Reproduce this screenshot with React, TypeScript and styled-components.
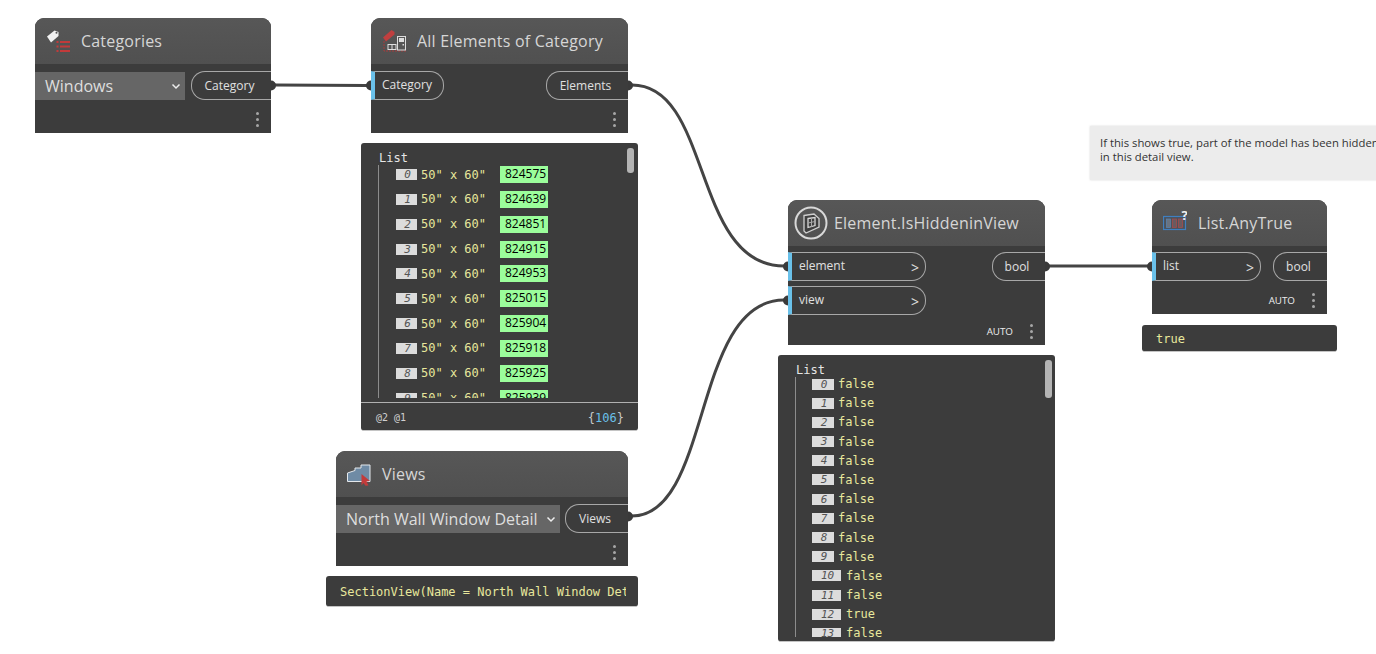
import React from 'react';
import styled, { createGlobalStyle } from 'styled-components';

const GlobalStyle = createGlobalStyle`
  html, body { margin: 0; padding: 0; background: #fff; overflow: hidden; }
`;

const uiFont = `"Open Sans", "Noto Sans", sans-serif`;
const monoFont = `"DejaVu Sans Mono", "Liberation Mono", monospace`;

const Canvas = styled.div`
  position: relative;
  width: 1376px;
  height: 654px;
  overflow: hidden;
  background: #fff;
  font-family: ${uiFont};
`;

const Wires = styled.svg`
  position: absolute;
  inset: 0;
  z-index: 2;
  pointer-events: none;
`;

const Node = styled.div<{ $x: number; $y: number; $w: number; $h: number }>`
  position: absolute;
  left: ${(p) => p.$x}px;
  top: ${(p) => p.$y}px;
  width: ${(p) => p.$w}px;
  height: ${(p) => p.$h}px;
  display: flex;
  flex-direction: column;
  background: #3c3c3c;
  border-radius: 9px 9px 0 0;
`;

const Header = styled.div`
  flex: none;
  height: 46px;
  display: flex;
  align-items: center;
  background: linear-gradient(#575757, #505050);
  border-radius: 9px 9px 0 0;
  color: #d6d6d6;
  font-size: 16px;
  letter-spacing: 0.2px;
  white-space: nowrap;
`;

const IconSlot = styled.div`
  flex: none;
  width: 46px;
  display: flex;
  justify-content: center;
  align-items: center;
`;

const Ports = styled.div<{ $top: number }>`
  display: flex;
  justify-content: space-between;
  align-items: flex-start;
  padding-top: ${(p) => p.$top}px;
`;

const Column = styled.div`
  display: flex;
  flex-direction: column;
  gap: 5px;
`;

const InPort = styled.div<{ $w: number }>`
  box-sizing: border-box;
  width: ${(p) => p.$w}px;
  height: 29px;
  display: flex;
  justify-content: space-between;
  align-items: center;
  padding: 0 6px 3px 7px;
  border: 1px solid #a8a8a8;
  border-left: 4px solid #6ac1ea;
  border-radius: 0 14px 14px 0;
  color: #e0e0e0;
  font-size: 12px;
`;

const Chevron = styled.span`
  font-size: 14px;
  margin-top: 4px;
`;

const OutPort = styled.div<{ $w: number }>`
  box-sizing: border-box;
  width: ${(p) => p.$w}px;
  height: 29px;
  display: flex;
  align-items: center;
  justify-content: center;
  padding-right: 4px;
  border: 1px solid #a8a8a8;
  border-right: none;
  border-radius: 14px 0 0 14px;
  color: #e0e0e0;
  font-size: 12px;
`;

const DropRow = styled.div`
  display: flex;
  justify-content: space-between;
  align-items: center;
  padding-top: 7px;
`;

const Dropdown = styled.div<{ $w: number }>`
  box-sizing: border-box;
  width: ${(p) => p.$w}px;
  height: 28px;
  display: flex;
  align-items: center;
  justify-content: space-between;
  padding: 0 4px 0 10px;
  background: #666;
  color: #dedede;
  font-size: 16px;
  white-space: nowrap;
`;

const Footer = styled.div`
  box-sizing: border-box;
  margin-top: auto;
  height: 30px;
  display: flex;
  align-items: center;
  justify-content: flex-end;
  gap: 17px;
  padding: 2px 12px 0 0;
  color: #ececec;
  font-size: 9.8px;
`;

const Dots = styled.div`
  display: flex;
  flex-direction: column;
  gap: 3px;
  span {
    display: block;
    width: 3px;
    height: 3px;
    border-radius: 50%;
    background: #a6a6a6;
  }
`;

const Preview = styled.div<{ $x: number; $y: number; $w: number; $h: number }>`
  position: absolute;
  left: ${(p) => p.$x}px;
  top: ${(p) => p.$y}px;
  width: ${(p) => p.$w}px;
  height: ${(p) => p.$h}px;
  display: flex;
  flex-direction: column;
  box-sizing: border-box;
  background: #3c3c3c;
  border-radius: 3px;
  border-bottom: 1px solid #c4c4c4;
  color: #e8e89c;
  font-family: ${monoFont};
  font-size: 12px;
`;

const SingleValue = styled.div`
  flex: 1;
  display: flex;
  align-items: center;
  padding: 1px 12px 0 14px;
  white-space: nowrap;
  overflow: hidden;
`;

const ValueClip = styled.div`
  overflow: hidden;
`;

const ListTitle = styled.div`
  flex: none;
  height: 14px;
  line-height: 14px;
  margin: 8px 0 0 18px;
  color: #e6e6e6;
`;

const ListBody = styled.div<{ $h: number; $gap: number; $top: number; $indent: number }>`
  flex: none;
  height: ${(p) => p.$h}px;
  margin-left: 17px;
  padding: ${(p) => p.$top}px 0 0 ${(p) => p.$indent}px;
  box-sizing: border-box;
  display: flex;
  flex-direction: column;
  gap: ${(p) => p.$gap}px;
  overflow: hidden;
  border-left: 1px solid #8c8c8c;
`;

const Row = styled.div<{ $h: number }>`
  flex: none;
  height: ${(p) => p.$h}px;
  display: flex;
  align-items: center;
  white-space: nowrap;
`;

const Badge = styled.span<{ $w: number }>`
  flex: none;
  width: ${(p) => p.$w}px;
  height: 11px;
  line-height: 11px;
  box-sizing: border-box;
  margin-right: 4px;
  padding-left: 2px;
  text-align: center;
  background: #dcdcdc;
  color: #555;
  font-style: italic;
  font-size: 11px;
`;

const WideBadge = styled(Badge)`
  margin-right: 5px;
`;

const RowValue = styled.span`
  flex: none;
  width: 79px;
`;

const IdChip = styled.span`
  flex: none;
  height: 17px;
  line-height: 15px;
  padding: 0 2px 0 5px;
  background: #9bfd9b;
  color: #000;
  font-family: ${uiFont};
  font-size: 12px;
`;

const ListFooter = styled.div`
  box-sizing: border-box;
  margin-top: auto;
  height: 28px;
  display: flex;
  align-items: center;
  justify-content: space-between;
  padding: 2px 14px 0 15px;
  border-top: 1px solid #b0b0b0;
  color: #d0d0d0;
  font-size: 10px;
`;

const Count = styled.span`
  font-size: 12px;
  color: #c8c8c8;
  b {
    font-weight: normal;
    color: #6ac1ea;
  }
`;

const ScrollThumb = styled.div<{ $h: number; $right: number }>`
  position: absolute;
  top: 5px;
  right: ${(p) => p.$right}px;
  width: 7px;
  height: ${(p) => p.$h}px;
  border-radius: 3px;
  background: #b4b4b4;
`;

const Note = styled.div`
  position: absolute;
  left: 1090px;
  top: 126px;
  width: 330px;
  height: 54px;
  box-sizing: border-box;
  padding: 10px;
  background: #ececec;
  box-shadow: 0 0 2px rgba(0, 0, 0, 0.15);
  color: #333;
  font-size: 11.3px;
  line-height: 14px;
  white-space: nowrap;
`;

const Caret = () => (
  <svg width="10" height="10" viewBox="0 0 10 10">
    <path d="M1.5 3.5 5 7l3.5-3.5" fill="none" stroke="#eee" strokeWidth="1.5" />
  </svg>
);

const NodeFooter = ({ auto }: { auto?: boolean }) => (
  <Footer>
    {auto && <span>AUTO</span>}
    <Dots>
      <span />
      <span />
      <span />
    </Dots>
  </Footer>
);

const CategoriesIcon = () => (
  <svg width="24" height="24" viewBox="0 0 24 24">
    <path d="M1 7.5 8.5 1.5 12.5 3 12.5 7 5 13.5Z" fill="#f2f2f2" />
    <circle cx="10.5" cy="3.8" r="1" fill="#555" />
    <g fill="#c23a3a">
      <rect x="10.5" y="12" width="2" height="2" />
      <rect x="10.5" y="16.5" width="2" height="2" />
      <rect x="10.5" y="21" width="2" height="2" />
      <rect x="14" y="12" width="10" height="2" />
      <rect x="14" y="16.5" width="10" height="2" />
      <rect x="14" y="21" width="10" height="2" />
    </g>
  </svg>
);

const ElementsIcon = () => (
  <svg width="24" height="24" viewBox="0 0 24 24">
    <path d="M1 8.5 9.5 1 12.5 3 12.5 5.5 4 12.5Z" fill="#bf3f3f" />
    <path d="M2 12V22H24" fill="none" stroke="#a83a3a" strokeWidth="1" strokeDasharray="2 1" />
    <rect x="6" y="15.5" width="8" height="5" fill="#555" stroke="#e0e0e0" strokeWidth="1" />
    <path d="M10 15.5V20.5" stroke="#e0e0e0" />
    <rect x="15.5" y="7.5" width="8" height="13.5" fill="#565656" stroke="#dcdcdc" />
    <rect x="17" y="9" width="5" height="4" fill="#dcdcdc" />
    <rect x="20.5" y="15" width="1.5" height="1.5" fill="#dcdcdc" />
  </svg>
);

const ViewsIcon = () => (
  <svg width="24" height="24" viewBox="0 0 24 24">
    <path d="M0.5 19.5V11L8 8.5V6H14V3H23V19.5Z" fill="#6f8ba5" stroke="#e4e8ec" strokeWidth="1" />
    <path d="M14.5 12 23 19 19.5 19.5 21.5 23.5 18.5 23.8 16.5 21 14.5 23.5Z" fill="#c23b3b" />
  </svg>
);

const ElementIcon = () => (
  <svg width="34" height="34" viewBox="0 0 34 34">
    <circle cx="17" cy="17" r="15.5" fill="none" stroke="#d8d8d8" strokeWidth="2" />
    <path d="M10 9.5 20 8 25 12.5V21L12 27 10 25Z" fill="#3f3f3f" stroke="#cfcfcf" strokeWidth="1.3" />
    <path d="M14 12.5 21 11.5V19.5L14 21.5Z" fill="none" stroke="#d8d8d8" strokeWidth="1.3" />
    <path d="M17.5 12V21M14 17 21 15.5" stroke="#a8a8a8" strokeWidth="1" />
  </svg>
);

const AnyTrueIcon = () => (
  <svg width="24" height="24" viewBox="0 0 24 24">
    <rect x="0.5" y="5.5" width="22" height="13" fill="#4c525a" stroke="#3f7fc0" strokeWidth="1.2" />
    <rect x="3.5" y="8" width="4" height="8.5" fill="#6a7380" stroke="#5b87b5" strokeWidth="0.7" />
    <rect x="9.5" y="8" width="4" height="8.5" fill="#6a5a60" stroke="#b04a4a" strokeWidth="0.7" />
    <rect x="15.5" y="8" width="4" height="8.5" fill="#6a5a60" stroke="#b04a4a" strokeWidth="0.7" />
    <text x="18.5" y="9" fill="#f0f0f0" fontSize="13" fontWeight="700" fontFamily="Open Sans, sans-serif">
      ?
    </text>
  </svg>
);

const elementIds = ['824575', '824639', '824851', '824915', '824953', '825015', '825904', '825918', '825925', '825939'];
const hiddenValues = ['false', 'false', 'false', 'false', 'false', 'false', 'false', 'false', 'false', 'false', 'false', 'false', 'true', 'false'];

export default function App() {
  return (
    <Canvas>
      <GlobalStyle />

      <Node $x={35} $y={18} $w={236} $h={115}>
        <Header>
          <IconSlot>
            <CategoriesIcon />
          </IconSlot>
          Categories
        </Header>
        <DropRow>
          <Dropdown $w={150}>
            Windows
            <Caret />
          </Dropdown>
          <OutPort $w={80}>Category</OutPort>
        </DropRow>
        <NodeFooter />
      </Node>

      <Node $x={371} $y={18} $w={257} $h={115}>
        <Header>
          <IconSlot>
            <ElementsIcon />
          </IconSlot>
          All Elements of Category
        </Header>
        <Ports $top={7}>
          <InPort $w={73}>Category</InPort>
          <OutPort $w={82}>Elements</OutPort>
        </Ports>
        <NodeFooter />
      </Node>

      <Preview $x={361} $y={143} $w={277} $h={288}>
        <ListTitle>List</ListTitle>
        <ListBody $h={233} $gap={7.85} $top={1} $indent={17}>
          {elementIds.map((id, i) => (
            <Row key={id} $h={17}>
              <Badge $w={21}>{i}</Badge>
              <RowValue>50" x 60"</RowValue>
              <IdChip>{id}</IdChip>
            </Row>
          ))}
        </ListBody>
        <ListFooter>
          <span>@2 @1</span>
          <Count>
            {'{'}
            <b>106</b>
            {'}'}
          </Count>
        </ListFooter>
        <ScrollThumb $h={25} $right={4} />
      </Preview>

      <Node $x={336} $y={451} $w={292} $h={115}>
        <Header>
          <IconSlot>
            <ViewsIcon />
          </IconSlot>
          Views
        </Header>
        <DropRow>
          <Dropdown $w={224}>
            North Wall Window Detail
            <Caret />
          </Dropdown>
          <OutPort $w={63}>Views</OutPort>
        </DropRow>
        <NodeFooter />
      </Node>

      <Preview $x={326} $y={576} $w={312} $h={31}>
        <SingleValue>
          <ValueClip>SectionView(Name = North Wall Window Detail)</ValueClip>
        </SingleValue>
      </Preview>

      <Node $x={788} $y={200} $w={257} $h={145}>
        <Header>
          <IconSlot>
            <ElementIcon />
          </IconSlot>
          Element.IsHiddeninView
        </Header>
        <Ports $top={6}>
          <Column>
            <InPort $w={138}>
              element
              <Chevron>&gt;</Chevron>
            </InPort>
            <InPort $w={138}>
              view
              <Chevron>&gt;</Chevron>
            </InPort>
          </Column>
          <OutPort $w={53}>bool</OutPort>
        </Ports>
        <NodeFooter auto />
      </Node>

      <Preview $x={778} $y={355} $w={277} $h={287}>
        <ListTitle>List</ListTitle>
        <ListBody $h={260} $gap={5.2} $top={0} $indent={16}>
          {hiddenValues.map((value, i) => (
            <Row key={i} $h={14}>
              {i < 10 ? <Badge $w={22}>{i}</Badge> : <WideBadge $w={29}>{i}</WideBadge>}
              <span>{value}</span>
            </Row>
          ))}
        </ListBody>
        <ScrollThumb $h={38} $right={3} />
      </Preview>

      <Note>
        If this shows true, part of the model has been hidden
        <br />
        in this detail view.
      </Note>

      <Node $x={1152} $y={200} $w={175} $h={114}>
        <Header>
          <IconSlot>
            <AnyTrueIcon />
          </IconSlot>
          List.AnyTrue
        </Header>
        <Ports $top={6}>
          <InPort $w={109}>
            list
            <Chevron>&gt;</Chevron>
          </InPort>
          <OutPort $w={54}>bool</OutPort>
        </Ports>
        <NodeFooter auto />
      </Node>

      <Preview $x={1142} $y={325} $w={195} $h={27}>
        <SingleValue>true</SingleValue>
      </Preview>

      <Wires width="1376" height="654" viewBox="0 0 1376 654">
        <g fill="none" stroke="#444" strokeWidth="3">
          <path d="M275 85 L367 85.5" />
          <path d="M632 85 C 712 85, 692 266, 784 266" />
          <path d="M632 516 C 712 516, 692 300, 784 300" />
          <path d="M1049 266 L1148 266" />
        </g>
        <g fill="#3a3a3a">
          <path d="M271 80.5 A5 5 0 0 1 271 90.5Z" />
          <path d="M628 80.5 A5 5 0 0 1 628 90.5Z" />
          <path d="M628 511.5 A5 5 0 0 1 628 521.5Z" />
          <path d="M1045 261.5 A5 5 0 0 1 1045 271.5Z" />
          <path d="M371 80.5 A5 5 0 0 0 371 90.5Z" />
          <path d="M788 261.5 A5 5 0 0 0 788 271.5Z" />
          <path d="M788 295.5 A5 5 0 0 0 788 305.5Z" />
          <path d="M1152 261.5 A5 5 0 0 0 1152 271.5Z" />
        </g>
      </Wires>
    </Canvas>
  );
}
